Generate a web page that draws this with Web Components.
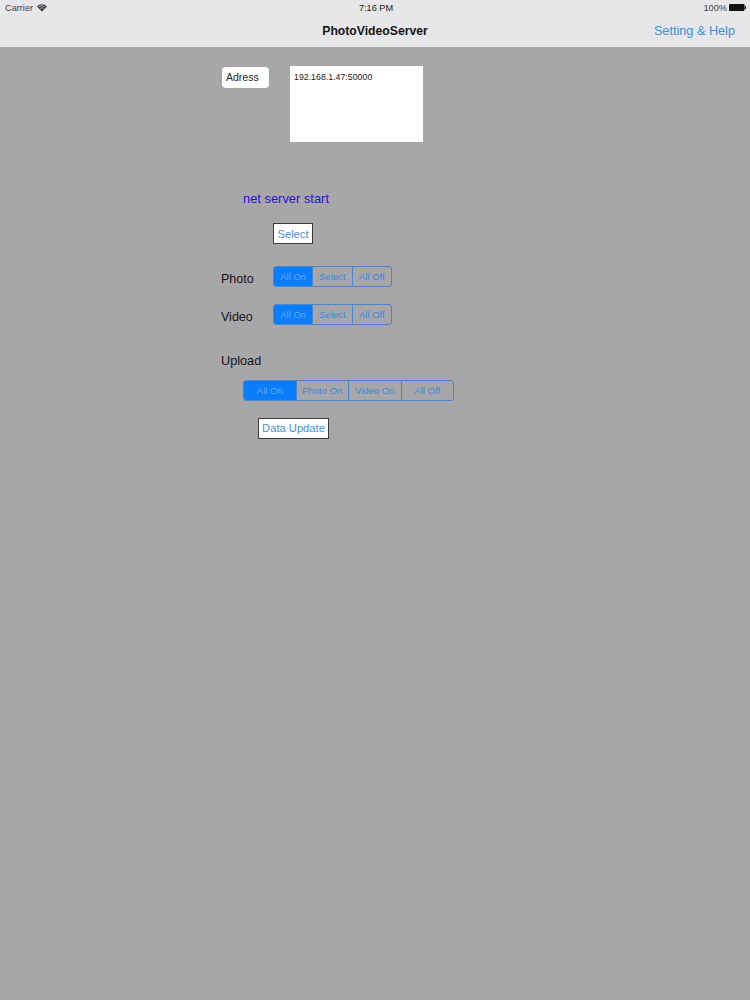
<!DOCTYPE html>
<html>
<head>
<meta charset="utf-8">
<style>
  html, body { margin: 0; height: 100%; background: #a7a6a8; font-family: "Liberation Sans", Arial, sans-serif; }
</style>
</head>
<body>
<ios-navbar title="PhotoVideoServer" action="Setting &amp; Help"></ios-navbar>
<server-panel></server-panel>

<script>
class IosNavbar extends HTMLElement {
  constructor() {
    super();
    this.attachShadow({mode: "open"});
  }
  connectedCallback() {
    this.shadowRoot.innerHTML = `
    <style>
      :host { display: block; height: 47px; background: #e7e6e8; color: #111; box-sizing: border-box; }
      .status { height: 15px; display: grid; grid-template-columns: 1fr auto 1fr; align-items: center; padding: 0 4px 0 5px; font-size: 9.2px; color: #444; }
      .left, .right { display: flex; align-items: center; gap: 4px; }
      .right { justify-content: flex-end; gap: 2px; }
      .time { color: #222; padding-left: 1px; }
      .bar { height: 32px; display: grid; grid-template-columns: 1fr auto 1fr; align-items: center; padding: 0 15px 0; box-sizing: border-box; }
      .title { font-size: 12.2px; font-weight: bold; color: #151515; }
      .action { justify-self: end; font-size: 12.7px; color: #3f8ee0; }
    </style>
    <div class="status">
      <div class="left">Carrier
        <svg width="10" height="8" viewBox="0 0 10 8"><path d="M5 7.6 L0 2.4 C3 -.6 7 -.6 10 2.4 Z" fill="#333"/><path d="M1.6 3 C3.8 1.2 6.2 1.2 8.4 3 M3 4.5 C4.3 3.6 5.7 3.6 7 4.5" stroke="#e7e6e8" stroke-width=".7" fill="none"/></svg>
      </div>
      <div class="time">7:16 PM</div>
      <div class="right">100%
        <svg width="17" height="7" viewBox="0 0 17 7"><rect width="15.5" height="7" rx="1" fill="#111"/><rect x="15.8" y="2" width="1.2" height="3" fill="#111"/></svg>
      </div>
    </div>
    <div class="bar">
      <span></span>
      <div class="title">${this.getAttribute("title")}</div>
      <div class="action">${this.getAttribute("action")}</div>
    </div>`;
  }
}
customElements.define("ios-navbar", IosNavbar);

// segmented control, first one selected
class SegControl extends HTMLElement {
  constructor() {
    super();
    this.attachShadow({mode: "open"});
  }
  connectedCallback() {
    const items = this.getAttribute("items").split(",");
    this.shadowRoot.innerHTML = `
    <style>
      :host { display: inline-flex; width: ${this.getAttribute("width")}px; height: 21px; border: 1px solid #4a87cf; border-radius: 3px; box-sizing: border-box; overflow: hidden; font-size: 9.5px; color: #3f86dc; }
      div { flex: 1; display: flex; align-items: center; justify-content: center; border-left: 1px solid #4a87cf; box-sizing: border-box; }
      div:first-of-type { border-left: 0; background: #0a7dfb; color: #5fa9f5; }
    </style>
    ${items.map(t => `<div>${t}</div>`).join("")}`;
  }
}
customElements.define("seg-control", SegControl);

class BoxButton extends HTMLElement {
  constructor() {
    super();
    this.attachShadow({mode: "open"});
  }
  connectedCallback() {
    this.shadowRoot.innerHTML = `
    <style>
      :host { display: inline-flex; align-items: center; justify-content: center; height: 21px; box-sizing: border-box; background: #fff; border: 1px solid #3a3a3a; font-size: 11.2px; color: #4a90d4; }
    </style>
    <slot></slot>`;
  }
}
customElements.define("box-button", BoxButton);

class ServerPanel extends HTMLElement {
  constructor() {
    super();
    this.attachShadow({mode: "open"});
  }
  connectedCallback() {
    this.shadowRoot.innerHTML = `
    <style>
      :host { display: block; padding: 19px 0 0 221px; }
      .addr { display: flex; align-items: flex-start; gap: 21px; }
      .tag { width: 47px; height: 21px; margin: 1px 0 0 1px; box-sizing: border-box; background: #fff; border-radius: 4px; font-size: 10.5px; color: #222; padding-left: 4px; line-height: 20px; }
      .box { width: 133px; height: 76px; background: #fff; box-sizing: border-box; padding: 6px 4px; font-size: 8.8px; color: #222; }
      .status { margin: 49px 0 0 22px; font-size: 12.9px; line-height: 16px; color: #2a10d8; }
      .select { margin: 16px 0 0 52px; }
      .select box-button { width: 40px; }
      .row { display: flex; align-items: center; font-size: 12.5px; color: #151515; }
      .row span { width: 52px; position: relative; top: 2px; }
      .photo { margin-top: 22px; }
      .video { margin-top: 17px; }
      .upload { margin-top: 28px; font-size: 12.7px; line-height: 16px; color: #151515; }
      .useg { margin: 11px 0 0 22px; }
      .update { margin: 17px 0 0 37px; }
      .update box-button { width: 71px; padding-bottom: 1px; }
    </style>
    <div class="addr">
      <div class="tag">Adress</div>
      <div class="box">192.168.1.47:50000</div>
    </div>
    <div class="status">net server start</div>
    <div class="select"><box-button>Select</box-button></div>
    <div class="row photo"><span>Photo</span><seg-control width="119" items="All On,Select,All Off"></seg-control></div>
    <div class="row video"><span>Video</span><seg-control width="119" items="All On,Select,All Off"></seg-control></div>
    <div class="upload">Upload</div>
    <div class="useg"><seg-control width="211" items="All On,Photo On,Video On,All Off"></seg-control></div>
    <div class="update"><box-button>Data Update</box-button></div>`;
  }
}
customElements.define("server-panel", ServerPanel);
</script>
</body>
</html>
